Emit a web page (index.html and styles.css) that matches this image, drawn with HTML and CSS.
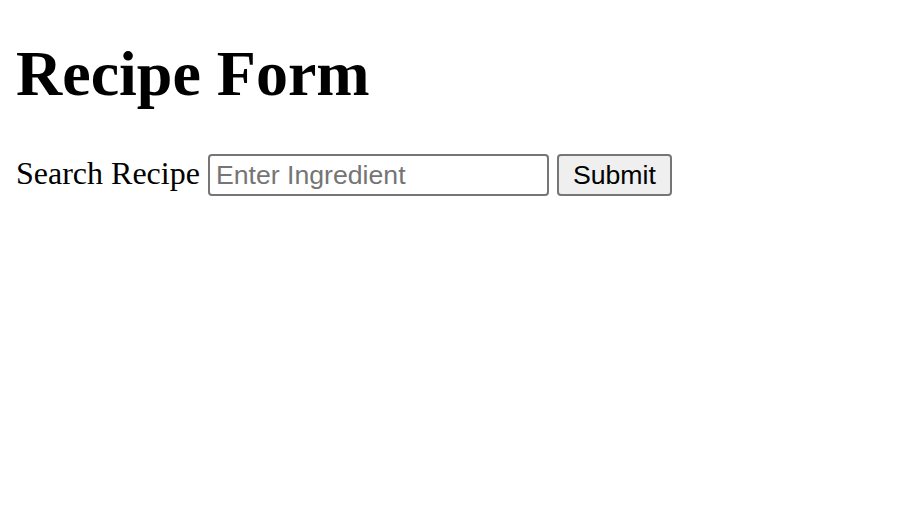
FILE: index.html
```html
<!DOCTYPE html>
<html>
<head>
<meta charset="utf-8">
<link rel="stylesheet" href="styles.css">
</head>
<body>
<h1 class="title">Recipe Form</h1>
<form class="search-form">
<label class="search-label" for="ing">Search Recipe</label> <input class="search-input" id="ing" type="text" placeholder="Enter Ingredient"> <button class="search-btn" type="button">Submit</button>
</form>
</body>
</html>
```
FILE: styles.css
```css
html, body {
  background: #fff;
}
body {
  margin: 16px;
  font-family: "Liberation Serif", "Times New Roman", serif;
  font-size: 32px;
  color: #000;
}
.title {
  font-size: 64px;
  font-weight: bold;
  margin: 21px 0 43px;
}
.search-form {
  margin: 0;
}
.search-label {
  font-size: 32px;
}
.search-input {
  box-sizing: border-box;
  width: 341px;
  height: 42px;
  font-family: "Liberation Sans", Arial, sans-serif;
  font-size: 26.67px;
  padding: 2px 4px 2px 6px;
  border: 2px solid #767676;
  border-radius: 4px;
  color: #000;
  background: #fff;
  vertical-align: baseline;
}
.search-input::placeholder {
  color: #757575;
}
.search-btn {
  box-sizing: border-box;
  height: 42px;
  width: 115px;
  font-family: "Liberation Sans", Arial, sans-serif;
  font-size: 26.67px;
  padding: 2px 12px;
  border: 2px solid #767676;
  border-radius: 4px;
  background: #efefef;
  color: #000;
}
```
